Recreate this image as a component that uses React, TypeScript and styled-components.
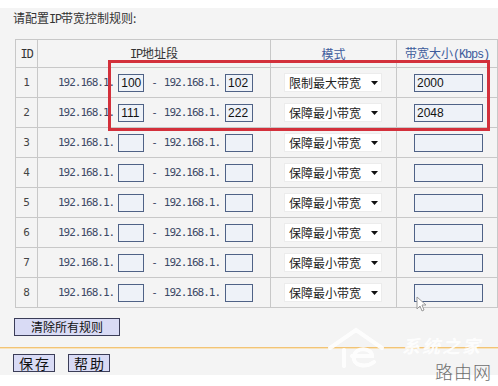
import React from "react";
import styled, { createGlobalStyle } from "styled-components";

const GlobalStyle = createGlobalStyle`
  html, body { margin: 0; padding: 0; background: #ffffff; }
  body {
    width: 498px;
    height: 386px;
    overflow: hidden;
    font-family: "Noto Sans CJK SC", "Liberation Sans", sans-serif;
  }
`;

const Page = styled.div`
  position: relative;
  width: 498px;
  height: 386px;
  padding-top: 8px;
  box-sizing: border-box;
`;

const Panel = styled.div`
  position: relative;
  height: 367px;
  background: #f4f4f4;
  padding-top: 2px;
  box-sizing: border-box;
  display: flex;
  flex-direction: column;
`;

const Title = styled.div`
  margin-left: 13px;
  height: 16px;
  font-size: 12px;
  line-height: 16px;
  color: #333;
  white-space: nowrap;
`;

const Grid = styled.table`
  margin: 13px 0 0 15px;
  width: 482px;
  border-collapse: collapse;
  table-layout: fixed;
`;

const HeadRow = styled.tr`
  height: 28px;
`;

const BodyRow = styled.tr`
  height: 30px;
`;

const HeadCell = styled.th<{ $blue?: boolean }>`
  border: 1px solid #c8c8c8;
  padding: 0;
  font-weight: normal;
  font-size: 12px;
  line-height: 14px;
  color: ${(p) => (p.$blue ? "#3d5c9c" : "#333")};
  text-align: center;
  vertical-align: middle;
  white-space: nowrap;
`;

const Mono = styled.span`
  font-family: "Liberation Mono", monospace;
  font-size: 12px;
  letter-spacing: -1.2px;
`;

const Cell = styled.td`
  border: 1px solid #c8c8c8;
  padding: 0;
  vertical-align: middle;
`;

const IdCell = styled(Cell)`
  text-align: center;
  font-family: "DejaVu Sans Mono", monospace;
  font-size: 11px;
  color: #444;
`;

const IpLine = styled.div`
  display: flex;
  align-items: center;
  padding-left: 20px;
`;

const IpText = styled.span`
  font-family: "DejaVu Sans Mono", monospace;
  font-size: 11px;
  letter-spacing: -1px;
  color: #3c4a66;
  white-space: nowrap;
`;

const Dash = styled.span`
  font-family: "DejaVu Sans Mono", monospace;
  font-size: 11px;
  color: #3c4a66;
  margin: 0 6px 0 7px;
`;

const Box = styled.div<{ $w: number; $ml: number }>`
  width: ${(p) => p.$w}px;
  height: 18px;
  margin-left: ${(p) => p.$ml}px;
  box-sizing: border-box;
  border: 1px solid #4f6286;
  background: #eef2f8;
  font-family: "Liberation Sans", Arial, sans-serif;
  font-size: 12px;
  line-height: 16px;
  padding-left: 2px;
  color: #111;
`;

const ModeCell = styled(Cell)`
  padding-left: 13px;
`;

const Select = styled.div`
  width: 98px;
  height: 19px;
  box-sizing: border-box;
  background: #ffffff;
  border: 1px solid #ececec;
  display: flex;
  align-items: center;
  justify-content: space-between;
  padding: 0 3px 0 4px;
  font-size: 12px;
  line-height: 17px;
  color: #222;
`;

const BwCell = styled(Cell)`
  padding-left: 17px;
`;

const ClearButton = styled.button`
  margin: 10px 0 0 14px;
  width: 106px;
  height: 18px;
  padding: 0;
  border: 1px solid #3b3d58;
  background: #d9dbf5;
  font-family: "Noto Sans CJK SC", sans-serif;
  font-size: 12px;
  line-height: 16px;
  color: #111;
`;

const Divider = styled.div`
  margin-top: 11px;
  height: 1px;
  background: #f2c475;
  border-bottom: 1px solid #f8e3bd;
`;

const Actions = styled.div`
  display: flex;
  gap: 13px;
  margin: 5px 0 0 13px;
`;

const ActionButton = styled.button`
  width: 42px;
  height: 18px;
  padding: 0 0 0 2px;
  border: 1px solid #3b3d58;
  background: #d9dbf5;
  font-family: "Noto Sans CJK SC", sans-serif;
  font-size: 14px;
  line-height: 16px;
  letter-spacing: 2px;
  color: #111;
  white-space: pre;
`;

const Highlight = styled.div`
  position: absolute;
  left: 108px;
  top: 52px;
  width: 382px;
  height: 71px;
  box-sizing: border-box;
  border: 3px solid #d3303b;
  pointer-events: none;
`;

const Cursor = styled.svg`
  position: absolute;
  left: 416px;
  top: 296px;
`;

const Logo = styled.svg`
  position: absolute;
  left: 326px;
  top: 326px;
  opacity: 0.9;
`;

const LogoText = styled.div`
  position: absolute;
  left: 402px;
  top: 336px;
  font-size: 18px;
  line-height: 19px;
  font-weight: 700;
  font-style: italic;
  color: #ffffff;
  letter-spacing: 2px;
  opacity: 0.9;
`;

const Site = styled.div`
  position: absolute;
  left: 435px;
  top: 360px;
  font-size: 18px;
  line-height: 22px;
  font-weight: 300;
  color: #6e6e6e;
  letter-spacing: 1px;
`;

type Rule = {
  id: number;
  from: string;
  to: string;
  mode: string;
  bw: string;
};

const rules: Rule[] = [
  { id: 1, from: "100", to: "102", mode: "限制最大带宽", bw: "2000" },
  { id: 2, from: "111", to: "222", mode: "保障最小带宽", bw: "2048" },
  { id: 3, from: "", to: "", mode: "保障最小带宽", bw: "" },
  { id: 4, from: "", to: "", mode: "保障最小带宽", bw: "" },
  { id: 5, from: "", to: "", mode: "保障最小带宽", bw: "" },
  { id: 6, from: "", to: "", mode: "保障最小带宽", bw: "" },
  { id: 7, from: "", to: "", mode: "保障最小带宽", bw: "" },
  { id: 8, from: "", to: "", mode: "保障最小带宽", bw: "" },
];

const Arrow = () => (
  <svg width="7" height="4" viewBox="0 0 7 4">
    <path d="M0 0 L7 0 L3.5 4 Z" fill="#111" />
  </svg>
);

export default function App() {
  return (
    <>
      <GlobalStyle />
      <Page>
        <Panel>
          <Title>
            请配置<Mono>IP</Mono>带宽控制规则:
          </Title>
          <Grid>
            <colgroup>
              <col style={{ width: 22 }} />
              <col style={{ width: 233 }} />
              <col style={{ width: 126 }} />
              <col style={{ width: 101 }} />
            </colgroup>
            <thead>
              <HeadRow>
                <HeadCell>
                  <Mono>ID</Mono>
                </HeadCell>
                <HeadCell>
                  <Mono>IP</Mono>地址段
                </HeadCell>
                <HeadCell $blue>模式</HeadCell>
                <HeadCell $blue>
                  带宽大小<Mono>(Kbps)</Mono>
                </HeadCell>
              </HeadRow>
            </thead>
            <tbody>
              {rules.map((r) => (
                <BodyRow key={r.id}>
                  <IdCell>{r.id}</IdCell>
                  <Cell>
                    <IpLine>
                      <IpText>192.168.1.</IpText>
                      <Box $w={26} $ml={4}>{r.from}</Box>
                      <Dash>-</Dash>
                      <IpText>192.168.1.</IpText>
                      <Box $w={28} $ml={5}>{r.to}</Box>
                    </IpLine>
                  </Cell>
                  <ModeCell>
                    <Select>
                      <span>{r.mode}</span>
                      <Arrow />
                    </Select>
                  </ModeCell>
                  <BwCell>
                    <Box $w={69} $ml={0}>{r.bw}</Box>
                  </BwCell>
                </BodyRow>
              ))}
            </tbody>
          </Grid>
          <ClearButton>清除所有规则</ClearButton>
          <Divider />
          <Actions>
            <ActionButton>保存</ActionButton>
            <ActionButton>帮助</ActionButton>
          </Actions>
          <Highlight />
        </Panel>
        <Cursor width="10" height="16" viewBox="0 0 10 16">
          <path d="M1 1 L1 13 L4 10 L6 15 L8 14 L6 9 L10 9 Z" fill="#ffffff" stroke="#9a9a9a" strokeWidth="1" />
        </Cursor>
        <Logo width="76" height="44" viewBox="0 0 76 44">
          <path d="M4 22 L30 4 L56 22" fill="none" stroke="#ffffff" strokeWidth="4" strokeLinecap="round" />
          <path d="M18 40 L18 24" fill="none" stroke="#ffffff" strokeWidth="4" strokeLinecap="round" />
          <path d="M26 30 L46 30 C46 22 30 20 28 30 C26 40 40 42 48 36" fill="none" stroke="#ffffff" strokeWidth="4" strokeLinecap="round" />
        </Logo>
        <LogoText>系统之家</LogoText>
        <Site>路由网</Site>
      </Page>
    </>
  );
}
